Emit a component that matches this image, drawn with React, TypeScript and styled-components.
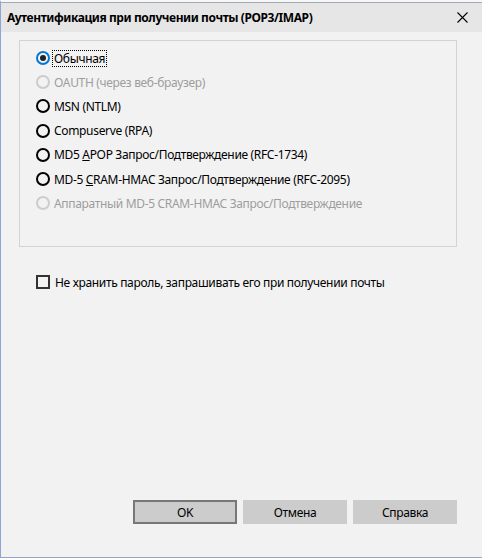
import React from "react";
import styled, { createGlobalStyle } from "styled-components";

const Global = createGlobalStyle`
  html, body { margin: 0; padding: 0; background: #f2f2f2; }
  * { box-sizing: border-box; }
`;

const Window = styled.div`
  width: 482px;
  height: 558px;
  display: flex;
  flex-direction: column;
  background: #f2f2f2;
  border-left: 1px solid #8da6d4;
  border-bottom: 1px solid #8da6d4;
  border-top: 2px solid #f7f7f7;
  font-family: "Noto Sans", "Open Sans", sans-serif;
  font-size: 12px;
  letter-spacing: -0.33px;
  color: #000;
`;

const TitleBar = styled.div`
  height: 30px;
  background: #e6e6e6;
  border-top: 1px solid #a3a9b3;
  display: flex;
  align-items: center;
  justify-content: space-between;
  padding: 0 12px 0 6px;
`;

const Title = styled.div`
  font-weight: bold;
  font-size: 12px;
  letter-spacing: -0.42px;
`;

const Close = styled.div`
  width: 16px;
  height: 16px;
  display: flex;
  align-items: center;
  justify-content: center;
`;

const Body = styled.div`
  flex: 1;
  display: flex;
  flex-direction: column;
  padding: 8px 25px 0 18px;
`;

const Group = styled.div`
  height: 207px;
  border: 1px solid #d3d3d3;
  padding: 5px 0 0 16px;
  display: flex;
  flex-direction: column;
`;

const Row = styled.div`
  height: 24.2px;
  display: flex;
  align-items: center;
  gap: 3px;
  color: ${(p: { $disabled?: boolean }) => (p.$disabled ? "#9d9d9d" : "#000")};
  white-space: nowrap;
`;

const RadioCircle = styled.span<{ $checked?: boolean; $disabled?: boolean }>`
  width: 14px;
  height: 14px;
  border-radius: 50%;
  border: 2px solid
    ${(p) => (p.$checked ? "#0078d7" : p.$disabled ? "#cccccc" : "#000")};
  display: flex;
  align-items: center;
  justify-content: center;
  flex-shrink: 0;
  &::after {
    content: "";
    display: ${(p) => (p.$checked ? "block" : "none")};
    width: 6px;
    height: 6px;
    border-radius: 50%;
    background: #222;
  }
`;

const Label = styled.span<{ $focused?: boolean }>`
  outline: ${(p) => (p.$focused ? "1px dotted #000" : "none")};
  padding: 0 1px;
  line-height: 15px;
`;

const CheckRow = styled(Row)`
  margin-top: 23px;
  padding-left: 17px;
  gap: 4px;
`;

const CheckBox = styled.span`
  width: 14px;
  height: 14px;
  border: 2px solid #333;
  flex-shrink: 0;
`;

const Spacer = styled.div`
  flex: 1;
`;

const Buttons = styled.div`
  display: flex;
  justify-content: flex-end;
  gap: 6px;
  margin-bottom: 33px;
`;

const Button = styled.div<{ $default?: boolean }>`
  width: 104px;
  height: 24px;
  background: #cccccc;
  border: ${(p) => (p.$default ? "2px solid #777777" : "none")};
  display: flex;
  align-items: center;
  justify-content: center;
`;

const U = styled.span`
  text-decoration: underline;
`;

type Opt = { label: React.ReactNode; checked?: boolean; disabled?: boolean };

const options: Opt[] = [
  { label: "Обычная", checked: true },
  { label: "OAUTH (через веб-браузер)", disabled: true },
  { label: "MSN (NTLM)" },
  { label: "Compuserve (RPA)" },
  {
    label: (
      <>
        MD5 <U>A</U>POP Запрос/Подтверждение (RFC-1734)
      </>
    ),
  },
  {
    label: (
      <>
        MD-5 <U>C</U>RAM-HMAC Запрос/Подтверждение (RFC-2095)
      </>
    ),
  },
  { label: "Аппаратный MD-5 CRAM-HMAC Запрос/Подтверждение", disabled: true },
];

export default function App() {
  return (
    <>
      <Global />
      <Window>
        <TitleBar>
          <Title>Аутентификация при получении почты (POP3/IMAP)</Title>
          <Close>
            <svg width="11" height="11" viewBox="0 0 11 11">
              <path d="M0.5 0.5 L10.5 10.5 M10.5 0.5 L0.5 10.5" stroke="#000" strokeWidth="1.1" />
            </svg>
          </Close>
        </TitleBar>
        <Body>
          <Group>
            {options.map((o, i) => (
              <Row key={i} $disabled={o.disabled}>
                <RadioCircle $checked={o.checked} $disabled={o.disabled} />
                <Label $focused={o.checked}>{o.label}</Label>
              </Row>
            ))}
          </Group>
          <CheckRow>
            <CheckBox />
            <Label>Не хранить пароль, запрашивать его при получении почты</Label>
          </CheckRow>
          <Spacer />
          <Buttons>
            <Button $default>OK</Button>
            <Button>Отмена</Button>
            <Button>Справка</Button>
          </Buttons>
        </Body>
      </Window>
    </>
  );
}
